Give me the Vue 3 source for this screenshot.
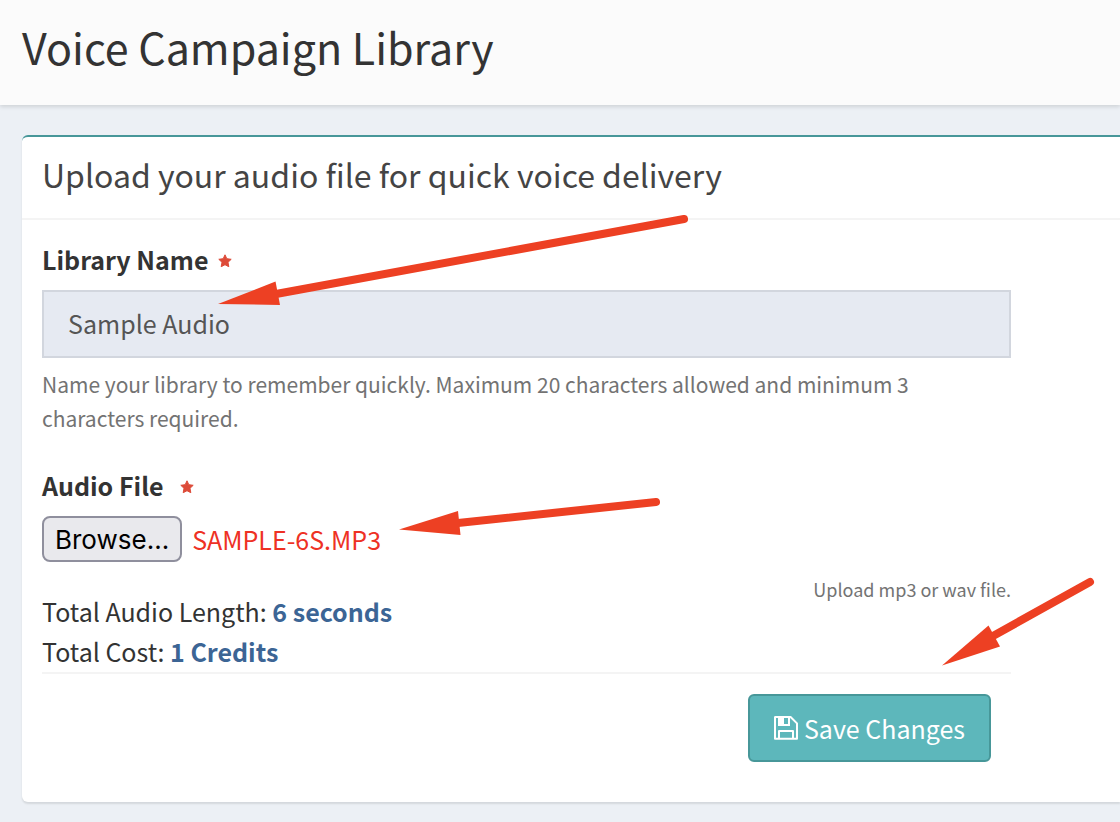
<script setup>
import { ref } from 'vue'

const libraryName = ref('Sample Audio')
const fileName = ref('SAMPLE-6S.MP3')
const picker = ref(null)

function onPick(event) {
  const file = event.target.files[0]
  if (file) fileName.value = file.name.toUpperCase()
}
</script>

<template>
  <div class="page">
    <header class="page-header">
      <h1>Voice Campaign Library</h1>
    </header>

    <main class="content">
      <section class="card">
        <h2>Upload your audio file for quick voice delivery</h2>
        <form class="form" @submit.prevent>
          <div class="field">
            <label class="label" for="library-name">
              Library Name
              <svg class="star" viewBox="0 0 14 14" aria-hidden="true">
                <path d="M7 .8 8.8 4.7 13.2 5.3 10 8.3 10.8 12.7 7 10.7 3.2 12.7 4 8.3 .8 5.3 5.2 4.7Z" />
              </svg>
            </label>
            <input id="library-name" v-model="libraryName" class="text-input" type="text" maxlength="20" />
            <p class="help">
              Name your library to remember quickly. Maximum 20 characters allowed and minimum 3 characters required.
            </p>
          </div>

          <div class="field">
            <label class="label wide" for="audio-browse">
              Audio File
              <svg class="star" viewBox="0 0 14 14" aria-hidden="true">
                <path d="M7 .8 8.8 4.7 13.2 5.3 10 8.3 10.8 12.7 7 10.7 3.2 12.7 4 8.3 .8 5.3 5.2 4.7Z" />
              </svg>
            </label>
            <div class="file-row">
              <button id="audio-browse" class="browse" type="button" @click="picker.click()">Browse...</button>
              <span class="file-name">{{ fileName }}</span>
              <input ref="picker" type="file" accept=".mp3,.wav" hidden @change="onPick" />
            </div>
          </div>

          <div class="summary">
            <div class="totals">
              <p>Total Audio Length: <strong>6 seconds</strong></p>
              <p>Total Cost: <strong>1 Credits</strong></p>
            </div>
            <small class="hint">Upload mp3 or wav file.</small>
          </div>

          <div class="actions">
            <button class="save" type="submit">
              <svg class="save-icon" viewBox="0 0 24 24" aria-hidden="true">
                <path d="M1.2 1H16.6L23 7.4V22.8H1V1.2ZM5 22.5V15H19V22.5" />
                <path class="solid" fill-rule="evenodd" d="M4 1H16V9.9H4ZM10 2H14V8H10Z" />
              </svg>
              Save Changes
            </button>
          </div>
        </form>
      </section>
    </main>

    <svg class="arrows" width="1120" height="822" aria-hidden="true">
      <path class="shaft" d="M684 219 276 294" />
      <path d="M218 304 275.5 281.5 280 305Z" />
      <path class="shaft" d="M656 502 458 523" />
      <path d="M399 529.5 458 511 460.5 535Z" />
      <path class="shaft" d="M1090 582 993 636" />
      <path d="M942 665.5 988.5 625.5 1000 646.5Z" />
    </svg>
  </div>
</template>

<style>
body {
  margin: 0;
  background: #ecf0f5;
}
</style>

<style scoped>
.page {
  position: relative;
  overflow: hidden;
  min-height: 100vh;
  background: #ecf0f5;
  color: #333;
  font-family: "Noto Sans CJK SC", "Open Sans", sans-serif;
  font-size: 25px;
  line-height: 40px;
}
h1, h2, p {
  margin: 0;
  font-weight: 400;
}
.page-header {
  padding: 14px 22px 27px;
  background: #fbfbfb;
  box-shadow: 0 2px 4px rgba(0, 0, 0, 0.12);
}
h1 {
  font-size: 43px;
  line-height: 64px;
}
.content {
  padding: 30px 0 20px 22px;
}
.card {
  border-top: 2px solid #479799;
  border-radius: 6px 0 0 6px;
  background: #fff;
  box-shadow: 0 2px 2px rgba(0, 0, 0, 0.1);
}
h2 {
  padding: 13px 20px 20px;
  border-bottom: 2px solid #f4f4f4;
  color: #444;
  font-size: 32px;
  line-height: 48px;
}
.form {
  padding: 19px 109px 40px 20px;
}
.field {
  display: flex;
  flex-direction: column;
}
.label {
  display: flex;
  align-items: center;
  gap: 10px;
  font-weight: 700;
}
.label.wide {
  gap: 16px;
}
.star {
  width: 14px;
  height: 14px;
  margin-top: 3px;
  fill: #dd4b39;
  stroke: #dd4b39;
  stroke-linejoin: round;
}
.text-input {
  box-sizing: border-box;
  width: 100%;
  height: 68px;
  margin-top: 11px;
  padding: 0 24px 2px;
  border: 2px solid #d2d6de;
  border-radius: 0;
  background: #e6eaf2;
  color: #555;
  font: inherit;
}
.help {
  margin: 9px 0 30px;
  color: #737373;
  font-size: 21px;
  line-height: 34px;
}
.file-row {
  display: flex;
  align-items: center;
  gap: 10px;
  margin-top: 11px;
}
.browse {
  height: 46px;
  padding: 0 11px;
  border: 2px solid #8f8f9d;
  border-radius: 8px;
  background: #e9e9ed;
  color: #000;
  font-family: Inter, sans-serif;
  font-size: 26px;
}
.file-name {
  color: #ee3124;
}
.summary {
  display: flex;
  justify-content: space-between;
  padding-top: 29px;
  border-bottom: 2px solid #f4f4f4;
}
.totals {
  padding-bottom: 1px;
}
.summary strong {
  color: #3c6595;
  font-weight: 700;
}
.hint {
  margin-top: -22px;
  color: #737373;
  font-size: 18px;
}
.actions {
  display: flex;
  justify-content: flex-end;
  padding: 20px 20px 0 0;
}
.save {
  display: flex;
  align-items: center;
  gap: 6px;
  height: 68px;
  padding: 0 24px 1px;
  border: 2px solid #479799;
  border-radius: 6px;
  background: #5db7bb;
  color: #fff;
  font: inherit;
}
.save-icon {
  width: 24px;
  height: 24px;
  fill: none;
  stroke: #fff;
  stroke-width: 2;
  stroke-linejoin: round;
}
.save-icon .solid {
  fill: #fff;
  stroke: none;
}
.arrows {
  position: absolute;
  top: 0;
  left: 0;
  fill: #ed4023;
  pointer-events: none;
}
.shaft {
  stroke: #ed4023;
  stroke-width: 8;
  stroke-linecap: round;
}
</style>
